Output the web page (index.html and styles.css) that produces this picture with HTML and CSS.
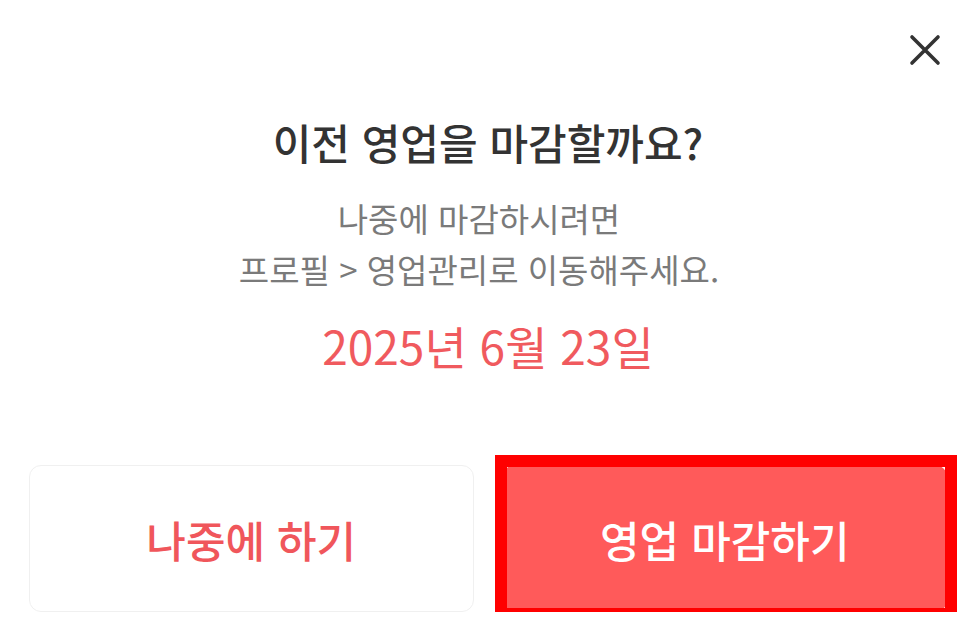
FILE: index.html
```html
<!DOCTYPE html>
<html lang="ko">
<head>
    <meta charset="UTF-8">
    <meta name="viewport" content="width=device-width, initial-scale=1.0">
    <title>영업 마감</title>
    <link rel="stylesheet" href="styles.css">
</head>
<body>
    <div class="sheet">
        <div class="close-row">
            <button class="close-btn" aria-label="닫기">
                <svg width="34" height="34" viewBox="0 0 34 34">
                    <path d="M4 4 L30 30 M30 4 L4 30" stroke="#333" stroke-width="3.6" stroke-linecap="round" fill="none"/>
                </svg>
            </button>
        </div>

        <h1 class="title">이전 영업을 마감할까요?</h1>
        <p class="desc">나중에 마감하시려면<br>프로필 &gt; 영업관리로 이동해주세요.</p>
        <p class="date">2025년 6월 23일</p>

        <div class="actions">
            <button class="btn btn-later">나중에 하기</button>
            <button class="btn btn-close highlighted">영업 마감하기</button>
        </div>
    </div>
</body>
</html>
```

FILE: styles.css
```css
/* Global Styling */
body {
    margin: 0;
    padding: 0;
    background: #ffffff;
    font-family: 'Noto Sans CJK KR', 'Noto Sans', sans-serif;
    color: #333;
}

.sheet {
    padding: 0 29px;
}

.close-row {
    height: 100px;
    display: flex;
    justify-content: flex-end;
    align-items: center;
}

.close-btn {
    background: none;
    border: none;
    padding: 0;
    margin-right: 2px;
    width: 40px;
    height: 40px;
    display: flex;
    align-items: center;
    justify-content: center;
    cursor: pointer;
}

.title {
    margin: 15px 0 0;
    font-size: 42px;
    line-height: 54px;
    font-weight: 500;
    text-align: center;
    color: #333;
}

.desc {
    margin: 24px 0 0;
    padding-right: 18px;
    font-size: 33px;
    line-height: 51px;
    text-align: center;
    color: #7a7a7a;
}

.date {
    margin: 20px 0 0;
    font-size: 46px;
    line-height: 60px;
    font-weight: 400;
    text-align: center;
    color: #f05a5e;
}

.actions {
    margin-top: 90px;
    display: grid;
    grid-template-columns: 1fr 1fr;
    gap: 29px;
}

.btn {
    height: 147px;
    border-radius: 12px;
    font-family: inherit;
    font-size: 43px;
    font-weight: 500;
    cursor: pointer;
}

.btn-later {
    background: #ffffff;
    border: 1.5px solid #f0f0f0;
    color: #f0565b;
}

.btn-close {
    background: #ff5a5a;
    border: none;
    color: #ffffff;
}

/* red review box around the main action */
.highlighted {
    position: relative;
}

.highlighted::after {
    content: '';
    position: absolute;
    top: -10px;
    left: -8px;
    right: -10px;
    bottom: -8px;
    border: 12px solid #ff0000;
}
```
